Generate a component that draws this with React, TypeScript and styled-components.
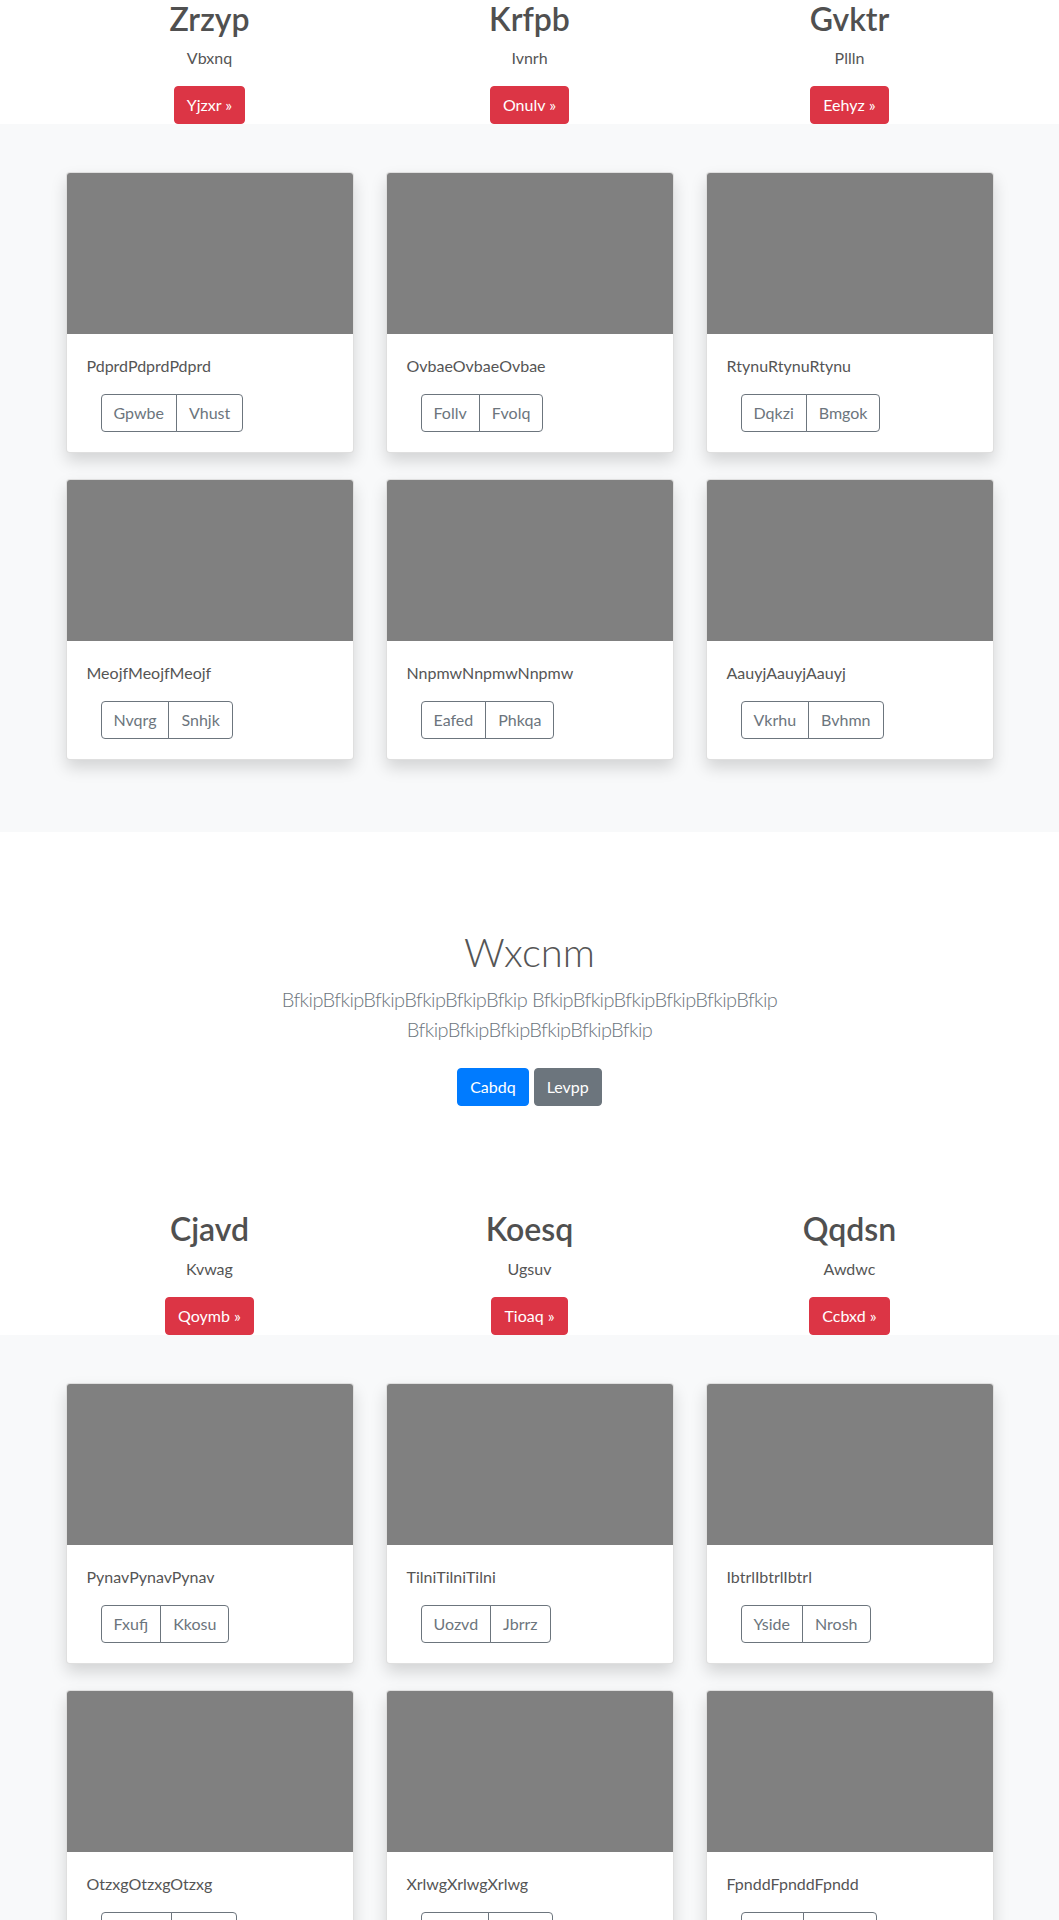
import React from "react";
import styled, { createGlobalStyle } from "styled-components";

const GlobalStyle = createGlobalStyle`
  html, body { margin: 0; padding: 0; }
  body {
    font-family: Lato, "Open Sans", "Liberation Sans", sans-serif;
    font-size: 16px;
    line-height: 1.5;
    color: #555555;
    background: #ffffff;
  }
  * { box-sizing: border-box; }
`;

const Marketing = styled.section`
  background: #ffffff;
`;

const MarketingRow = styled.div`
  max-width: 960px;
  margin: 0 auto;
  display: grid;
  grid-template-columns: repeat(3, 1fr);
`;

const Feature = styled.div`
  padding: 0 15px;
  text-align: center;
`;

const FeatureTitle = styled.h2`
  margin: 0 0 8px;
  font-size: 32px;
  font-weight: 600;
  line-height: 1.2;
  color: #505050;
`;

const FeatureText = styled.p`
  margin: 0 0 16px;
  color: #555555;
`;

const Button = styled.a<{ $variant: "danger" | "primary" | "secondary" }>`
  display: inline-block;
  padding: 6px 12px;
  font-size: 16px;
  line-height: 24px;
  border: 1px solid transparent;
  border-radius: 4px;
  color: #ffffff;
  text-decoration: none;
  cursor: pointer;
  background: ${(p) =>
    p.$variant === "danger" ? "#dc3545" : p.$variant === "primary" ? "#007bff" : "#6c757d"};
  border-color: ${(p) =>
    p.$variant === "danger" ? "#dc3545" : p.$variant === "primary" ? "#007bff" : "#6c757d"};
`;

const Album = styled.section`
  background: #f8f9fa;
  padding: 48px 0 72px;
`;

const CardGrid = styled.div`
  width: 928px;
  margin: 0 auto;
  display: grid;
  grid-template-columns: repeat(3, 1fr);
  column-gap: 32px;
  row-gap: 26px;
`;

const Card = styled.div`
  background: #ffffff;
  border: 1px solid rgba(0, 0, 0, 0.125);
  border-radius: 4px;
  box-shadow: 0 8px 16px rgba(0, 0, 0, 0.15);
  overflow: hidden;
  display: flex;
  flex-direction: column;
`;

const Thumb = styled.div`
  height: 161px;
  background: #808080;
`;

const CardBody = styled.div`
  padding: 20px;
`;

const CardText = styled.p`
  margin: 0 0 16px;
  color: #555555;
`;

const BtnGroup = styled.div`
  display: inline-flex;
  margin-left: 14px;
`;

const OutlineBtn = styled.button<{ $first?: boolean }>`
  font-family: inherit;
  font-size: 16px;
  line-height: 24px;
  padding: 6px 12px;
  background: transparent;
  color: #6c757d;
  border: 1px solid #6c757d;
  margin-left: ${(p) => (p.$first ? "0" : "-1px")};
  border-radius: ${(p) => (p.$first ? "4px 0 0 4px" : "0 4px 4px 0")};
  cursor: pointer;
`;

const Jumbotron = styled.section`
  background: #ffffff;
  padding: 96px 0;
  text-align: center;
`;

const JumboContainer = styled.div`
  max-width: 640px;
  margin: 0 auto;
  padding: 0 15px;
`;

const JumboTitle = styled.h1`
  margin: 0 0 8px;
  font-size: 40px;
  font-weight: 300;
  line-height: 1.2;
  color: #555555;
`;

const Lead = styled.p`
  margin: 0 0 16px;
  font-size: 20px;
  font-weight: 300;
  line-height: 1.5;
  letter-spacing: -0.6px;
  color: #6c757d;
`;

const Actions = styled.p`
  margin: 0;
  display: flex;
  justify-content: center;
  gap: 5px;
`;

const ActionBtn = styled(Button)`
  margin: 8px 0;
`;

type FeatureItem = { title: string; text: string; cta: string };
type CardItem = { text: string; a: string; b: string };

const features1: FeatureItem[] = [
  { title: "Zrzyp", text: "Vbxnq", cta: "Yjzxr »" },
  { title: "Krfpb", text: "Ivnrh", cta: "Onulv »" },
  { title: "Gvktr", text: "Pllln", cta: "Eehyz »" },
];

const features2: FeatureItem[] = [
  { title: "Cjavd", text: "Kvwag", cta: "Qoymb »" },
  { title: "Koesq", text: "Ugsuv", cta: "Tioaq »" },
  { title: "Qqdsn", text: "Awdwc", cta: "Ccbxd »" },
];

const cards1: CardItem[] = [
  { text: "PdprdPdprdPdprd", a: "Gpwbe", b: "Vhust" },
  { text: "OvbaeOvbaeOvbae", a: "Follv", b: "Fvolq" },
  { text: "RtynuRtynuRtynu", a: "Dqkzi", b: "Bmgok" },
  { text: "MeojfMeojfMeojf", a: "Nvqrg", b: "Snhjk" },
  { text: "NnpmwNnpmwNnpmw", a: "Eafed", b: "Phkqa" },
  { text: "AauyjAauyjAauyj", a: "Vkrhu", b: "Bvhmn" },
];

const cards2: CardItem[] = [
  { text: "PynavPynavPynav", a: "Fxufj", b: "Kkosu" },
  { text: "TilniTilniTilni", a: "Uozvd", b: "Jbrrz" },
  { text: "IbtrlIbtrlIbtrl", a: "Yside", b: "Nrosh" },
  { text: "OtzxgOtzxgOtzxg", a: "Qwert", b: "Asdfg" },
  { text: "XrlwgXrlwgXrlwg", a: "Zxcvb", b: "Poiuy" },
  { text: "FpnddFpnddFpndd", a: "Lkjhg", b: "Mnbvc" },
];

const Features = ({ items }: { items: FeatureItem[] }) => (
  <Marketing>
    <MarketingRow>
      {items.map((f) => (
        <Feature key={f.title}>
          <FeatureTitle>{f.title}</FeatureTitle>
          <FeatureText>{f.text}</FeatureText>
          <Button $variant="danger" href="#">
            {f.cta}
          </Button>
        </Feature>
      ))}
    </MarketingRow>
  </Marketing>
);

const Cards = ({ items }: { items: CardItem[] }) => (
  <Album>
    <CardGrid>
      {items.map((c) => (
        <Card key={c.text}>
          <Thumb />
          <CardBody>
            <CardText>{c.text}</CardText>
            <BtnGroup>
              <OutlineBtn $first type="button">
                {c.a}
              </OutlineBtn>
              <OutlineBtn type="button">{c.b}</OutlineBtn>
            </BtnGroup>
          </CardBody>
        </Card>
      ))}
    </CardGrid>
  </Album>
);

export default function App() {
  return (
    <>
      <GlobalStyle />
      <Features items={features1} />
      <Cards items={cards1} />
      <Jumbotron>
        <JumboContainer>
          <JumboTitle>Wxcnm</JumboTitle>
          <Lead>
            BfkipBfkipBfkipBfkipBfkipBfkip BfkipBfkipBfkipBfkipBfkipBfkip BfkipBfkipBfkipBfkipBfkipBfkip
          </Lead>
          <Actions>
            <ActionBtn $variant="primary" href="#">
              Cabdq
            </ActionBtn>
            <ActionBtn $variant="secondary" href="#">
              Levpp
            </ActionBtn>
          </Actions>
        </JumboContainer>
      </Jumbotron>
      <Features items={features2} />
      <Cards items={cards2} />
    </>
  );
}
